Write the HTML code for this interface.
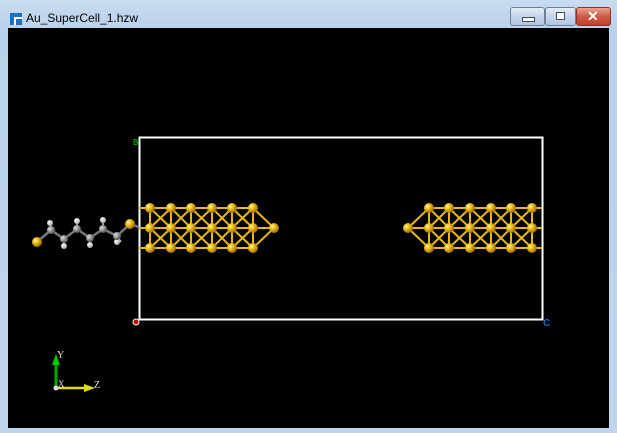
<!DOCTYPE html>
<html><head><style>
html,body{margin:0;padding:0;width:617px;height:433px;overflow:hidden;background:#c4d9ee}
.win{position:absolute;left:0;top:0;width:617px;height:433px;background:linear-gradient(#c9dcf0,#b9d1ea 30px,#bfd5ec);}
.title{position:absolute;left:26px;top:11px;font:12px "Liberation Sans",sans-serif;color:#000}
.icon{position:absolute;left:10px;top:13px;width:12px;height:12px;background:#1d6fc4}
.icon:after{content:"";position:absolute;left:4px;top:4px;width:8px;height:8px;background:#fff}
.icon:before{content:"";position:absolute;left:6px;top:6px;width:6px;height:6px;background:#1d6fc4;z-index:1}
.btn{position:absolute;top:7px;height:17px;border:1px solid #6d7f98;border-radius:3px;background:linear-gradient(#e6eef8,#c4d4e8 50%,#b3c6df)}
.close{background:linear-gradient(#e8a290,#cf5a45 50%,#c24030);border-color:#8a3328}
.view{position:absolute;left:8px;top:28px;width:601px;height:400px;background:#000}
</style></head><body>
<div class="win">
<div class="icon"></div>
<div class="title">Au_SuperCell_1.hzw</div>
<div class="btn" style="left:510px;width:33px"><div style="position:absolute;left:11px;top:9px;width:11px;height:3px;background:#fff;border:1px solid #3e4e66"></div></div>
<div class="btn" style="left:545px;width:29px"><div style="position:absolute;left:10px;top:4px;width:7px;height:6px;background:#fff;border:1px solid #3e4e66"></div></div>
<div class="btn close" style="left:576px;width:33px"><div style="position:absolute;left:10px;top:0px;color:#fff;font:bold 14px 'Liberation Sans',sans-serif">✕</div></div>
<div class="view">
<svg width="601" height="400" viewBox="8 28 601 400" style="position:absolute;left:0;top:0">
<defs>
<radialGradient id="g" cx="35%" cy="35%" r="65%"><stop offset="0" stop-color="#fff7a0"/><stop offset="0.4" stop-color="#f0c020"/><stop offset="1" stop-color="#a07000"/></radialGradient>
<radialGradient id="c" cx="35%" cy="35%" r="65%"><stop offset="0" stop-color="#ddd"/><stop offset="1" stop-color="#555"/></radialGradient>
<radialGradient id="h" cx="35%" cy="35%" r="65%"><stop offset="0" stop-color="#fff"/><stop offset="1" stop-color="#aaa"/></radialGradient>
</defs>
<rect x="139.5" y="137.5" width="403" height="182" fill="none" stroke="#fff" stroke-width="2"/>
<text x="133" y="145" fill="#0c0" font-family="Liberation Mono" font-size="9">B</text>
<circle cx="136" cy="322" r="3" fill="#c00" stroke="#fff" stroke-width="1"/>
<text x="543" y="326" fill="#1a6fd0" font-family="Liberation Sans" font-size="10" font-weight="bold">C</text>
<g stroke="#e8b818" stroke-width="2" fill="none">
<path d="M139,208H253M139,228H274M139,248H253M150,208V248M171,208V248M191,208V248M212,208V248M232,208V248M253,208V248"/>
<path d="M150,208L171,228L191,208L212,228L232,208L253,228M150,228L171,208L191,228L212,208L232,228L253,208"/>
<path d="M150,248L171,228L191,248L212,228L232,248L253,228M150,228L171,248L191,228L212,248L232,228L253,248"/>
<path d="M253,208L274,228L253,248"/>
<path d="M429,208H542M408,228H542M429,248H542M429,208V248M449,208V248M470,208V248M491,208V248M511,208V248M532,208V248"/>
<path d="M429,208L449,228L470,208L491,228L511,208L532,228M429,228L449,208L470,228L491,208L511,228L532,208"/>
<path d="M429,248L449,228L470,248L491,228L511,248L532,228M429,228L449,248L470,228L491,248L511,228L532,248"/>
<path d="M429,208L408,228L429,248"/>
</g>
<g fill="url(#g)">
<circle cx="150" cy="208" r="5"/><circle cx="171" cy="208" r="5"/><circle cx="191" cy="208" r="5"/><circle cx="212" cy="208" r="5"/><circle cx="232" cy="208" r="5"/><circle cx="253" cy="208" r="5"/>
<circle cx="150" cy="228" r="5"/><circle cx="171" cy="228" r="5"/><circle cx="191" cy="228" r="5"/><circle cx="212" cy="228" r="5"/><circle cx="232" cy="228" r="5"/><circle cx="253" cy="228" r="5"/>
<circle cx="150" cy="248" r="5"/><circle cx="171" cy="248" r="5"/><circle cx="191" cy="248" r="5"/><circle cx="212" cy="248" r="5"/><circle cx="232" cy="248" r="5"/><circle cx="253" cy="248" r="5"/>
<circle cx="274" cy="228" r="5"/><circle cx="408" cy="228" r="5"/>
<circle cx="429" cy="208" r="5"/><circle cx="449" cy="208" r="5"/><circle cx="470" cy="208" r="5"/><circle cx="491" cy="208" r="5"/><circle cx="511" cy="208" r="5"/><circle cx="532" cy="208" r="5"/>
<circle cx="429" cy="228" r="5"/><circle cx="449" cy="228" r="5"/><circle cx="470" cy="228" r="5"/><circle cx="491" cy="228" r="5"/><circle cx="511" cy="228" r="5"/><circle cx="532" cy="228" r="5"/>
<circle cx="429" cy="248" r="5"/><circle cx="449" cy="248" r="5"/><circle cx="470" cy="248" r="5"/><circle cx="491" cy="248" r="5"/><circle cx="511" cy="248" r="5"/><circle cx="532" cy="248" r="5"/>
</g>
<g stroke="#777" stroke-width="2.5" fill="none"><path d="M37,242L51,230L64,239L77,229L90,238L103,229L117,236L130,224L139,227"/></g>
<g stroke="#ccc" stroke-width="1.5"><path d="M51,230V223M64,239V246M77,229V221M90,238V245M103,229V220M117,236L121,242"/></g>
<g fill="url(#h)"><circle cx="50" cy="223" r="3"/><circle cx="64" cy="246" r="3"/><circle cx="77" cy="221" r="3"/><circle cx="90" cy="245" r="3"/><circle cx="103" cy="220" r="3"/><circle cx="117" cy="242" r="3"/></g>
<g fill="url(#c)"><circle cx="51" cy="230" r="4"/><circle cx="64" cy="239" r="4"/><circle cx="77" cy="229" r="4"/><circle cx="90" cy="238" r="4"/><circle cx="103" cy="229" r="4"/><circle cx="117" cy="236" r="4"/></g>
<g fill="url(#g)"><circle cx="37" cy="242" r="5"/><circle cx="130" cy="224" r="5"/></g>
<line x1="56" y1="388" x2="56" y2="363" stroke="#0a0" stroke-width="3"/>
<polygon points="52,365 60,365 56,354" fill="#0c0"/>
<line x1="56" y1="388" x2="86" y2="388" stroke="#dd0" stroke-width="2.5"/>
<polygon points="84,384 84,392 95,388" fill="#dd0"/>
<circle cx="56" cy="388" r="2.5" fill="#ddd"/>
<text x="57" y="358" fill="#ddd" font-family="Liberation Serif" font-size="10">Y</text>
<text x="58" y="387" fill="#ddd" font-family="Liberation Serif" font-size="9">X</text>
<text x="94" y="388" fill="#ddd" font-family="Liberation Serif" font-size="10">Z</text>
</svg>
</div>
</div>
</body></html>
